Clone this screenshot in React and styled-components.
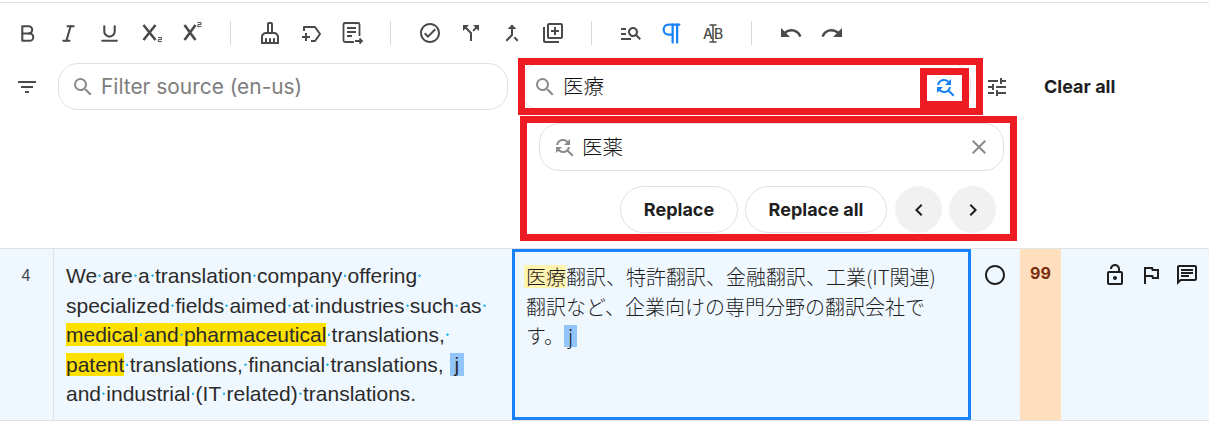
import styled, { createGlobalStyle } from 'styled-components';
import {
  MdCallMerge,
  MdCallSplit,
  MdChevronLeft,
  MdChevronRight,
  MdClose,
  MdFilterList,
  MdFindReplace,
  MdOutlineAssistantPhoto,
  MdOutlineChat,
  MdOutlineCheckCircle,
  MdOutlineCircle,
  MdOutlineCleaningServices,
  MdOutlineLibraryAdd,
  MdOutlineLockOpen,
  MdOutlineManageSearch,
  MdOutlineTune,
  MdRedo,
  MdSearch,
  MdUndo,
} from 'react-icons/md';
import { TbBold, TbItalic, TbPilcrow, TbUnderline } from 'react-icons/tb';

const GlobalStyle = createGlobalStyle`
  body {
    margin: 0;
    background: #ffffff;
    font-family: 'Inter', 'Noto Sans CJK JP', sans-serif;
  }
`;

const Page = styled.div`
  position: relative;
  width: 1209px;
  height: 421px;
  overflow: hidden;
`;

const TopRule = styled.div`
  height: 1px;
  margin-top: 2px;
  background: #e2e2e2;
`;

const Toolbar = styled.div`
  display: flex;
  align-items: center;
  height: 60px;
  padding-left: 7px;
  box-sizing: border-box;
`;

const ToolButton = styled.div`
  width: 41px;
  display: flex;
  justify-content: center;
  align-items: center;
  color: ${(p) => (p.$active ? '#1a82f7' : '#4a4a4a')};
`;

const Divider = styled.div`
  width: 1px;
  height: 24px;
  margin: 0 18px;
  background: #d8d8d8;
`;

const FilterRow = styled.div`
  display: flex;
  align-items: center;
  height: 47px;
`;

const FilterIcon = styled.div`
  width: 54px;
  display: flex;
  justify-content: center;
  color: #4a4a4a;
`;

const Field = styled.div`
  display: flex;
  align-items: center;
  width: ${(p) => p.$width}px;
  height: ${(p) => p.$height}px;
  margin-left: ${(p) => p.$left}px;
  padding: 0 12px;
  gap: 6px;
  box-sizing: border-box;
  border: 1px solid #e0e0e0;
  border-radius: 20px;
  background: #ffffff;
  color: #8a8a8a;
  flex-shrink: 0;
`;

const Placeholder = styled.span`
  font-size: 20.9px;
  color: #7d7d7d;
`;

const FieldValue = styled.span`
  flex: 1;
  margin-bottom: 3px;
  font-family: 'Noto Sans CJK JP', sans-serif;
  font-size: 20.5px;
  font-weight: 300;
  color: #111111;
`;

const FindAction = styled.div`
  display: flex;
  color: #1a82f7;
  margin-right: 1px;
`;

const Tune = styled.div`
  display: flex;
  width: 26px;
  margin-left: 14px;
  color: #4a4a4a;
`;

const ClearAll = styled.div`
  margin-left: 33px;
  font-size: 18px;
  font-weight: 700;
  color: #1f1f1f;
`;

const ReplacePanel = styled.div`
  display: flex;
  flex-direction: column;
  width: 465px;
  height: 125px;
  margin: 13px 0 0 539px;
`;

const ButtonRow = styled.div`
  display: flex;
  justify-content: flex-end;
  gap: 7px;
  margin: 15px 8px 0 0;
`;

const PillButton = styled.div`
  display: flex;
  align-items: center;
  justify-content: center;
  width: ${(p) => p.$width}px;
  height: 47px;
  box-sizing: border-box;
  border: 1px solid #e0e0e0;
  border-radius: 24px;
  font-size: 18px;
  font-weight: 700;
  color: #1f1f1f;
`;

const RoundButton = styled.div`
  display: flex;
  align-items: center;
  justify-content: center;
  width: 47px;
  height: 47px;
  border-radius: 50%;
  background: #f1f1f1;
  color: #1f1f1f;

  ${PillButton} + & {
    margin-left: 1px;
  }
`;

const Row = styled.div`
  display: flex;
  height: 173px;
  box-sizing: border-box;
  border-top: 1px solid #e2e2e2;
  border-bottom: 1px solid #e2e2e2;
  background: #f0f8ff;
`;

const NumberCell = styled.div`
  width: 54px;
  box-sizing: border-box;
  padding-top: 18px;
  padding-right: 1px;
  border-right: 1px solid #dde3e8;
  text-align: center;
  font-family: 'Liberation Sans', sans-serif;
  font-size: 16px;
  color: #3f4650;
`;

const SourceCell = styled.div`
  width: 458px;
  box-sizing: border-box;
  padding: 12px 0 0 12px;
  font-family: 'Liberation Sans', sans-serif;
  font-size: 21px;
  line-height: 29.5px;
  color: #2b2b2b;
`;

const Line = styled.div`
  white-space: pre;
`;

const Dot = styled.span`
  display: inline-block;
  width: 5.25px;
  height: 1em;
  vertical-align: baseline;
  background: radial-gradient(circle at 50% 65%, #29b6e8 1px, transparent 1.4px);
`;

const Mark = styled.span`
  background: #ffe100;
`;

const Picked = styled.span`
  background: #93c5fd;
  padding: 0 5px;
`;

const TargetCell = styled.div`
  width: 459px;
  box-sizing: border-box;
  padding: 10px 0 0 9px;
  border: 3px solid #1a82f7;
  font-family: 'Noto Sans CJK JP', sans-serif;
  font-size: 20px;
  font-weight: 300;
  line-height: 29.5px;
  color: #1f1f1f;
`;

const TargetLine = styled(Line)`
  padding-left: ${(p) => p.$inset}px;
`;

const TargetMark = styled.span`
  display: inline-block;
  padding-left: 2px;
  line-height: 23px;
  background: #fff3b0;
`;

const TargetPicked = styled(Picked)`
  display: inline-block;
  padding: 0 4px;
  line-height: 22px;
`;

const StatusCell = styled.div`
  display: flex;
  justify-content: center;
  width: 49px;
  padding: 14px 2px 0 0;
  box-sizing: border-box;
  color: #1f1f1f;
`;

const ScoreCell = styled.div`
  width: 41px;
  padding-top: 14px;
  box-sizing: border-box;
  background: #ffdfbd;
  text-align: center;
  font-family: 'Inter', sans-serif;
  font-size: 16px;
  font-weight: 700;
  color: #7a2e0e;
`;

const ActionCell = styled.div`
  display: flex;
  justify-content: flex-end;
  flex: 1;
  gap: 12px;
  padding: 14px 10px 0 0;
  box-sizing: border-box;
  color: #1f1f1f;
`;

const Callout = styled.div`
  position: absolute;
  left: ${(p) => p.$x}px;
  top: ${(p) => p.$y}px;
  width: ${(p) => p.$w}px;
  height: ${(p) => p.$h}px;
  box-sizing: border-box;
  border: 7px solid #ed1c24;
`;

const GlyphText = styled.text`
  font-family: 'Inter', sans-serif;
  font-size: 14px;
  font-weight: 500;
  fill: currentColor;
`;

function SubscriptIcon() {
  return (
    <svg width="24" height="24" viewBox="0 0 24 24" fill="none" stroke="currentColor">
      <path d="M4.5 4l12 15M16.5 4l-12 15" strokeWidth="2.6" />
      <path d="M19 16.6h3.5v2h-3.2v2h3.5" strokeWidth="1" />
    </svg>
  );
}

function SuperscriptIcon() {
  return (
    <svg width="24" height="24" viewBox="0 0 24 24" fill="none" stroke="currentColor">
      <path d="M4.5 4l11 15M15.5 4l-11 15" strokeWidth="2.6" />
      <path d="M17.5 1.6h3.5v2h-3.2v2h3.5" strokeWidth="1" />
    </svg>
  );
}

function AddTagIcon() {
  return (
    <svg width="24" height="24" viewBox="0 0 24 24" fill="none" stroke="currentColor" strokeWidth="2">
      <path d="M5 10V6h11l5 7-5 7h-4" strokeLinejoin="round" />
      <path d="M7 12v8M3 16h8" />
    </svg>
  );
}

function DocExportIcon() {
  return (
    <svg width="24" height="24" viewBox="0 0 24 24" fill="none" stroke="currentColor" strokeWidth="1.8">
      <path d="M14 21H5a1.5 1.5 0 0 1-1.5-1.5v-16A1.5 1.5 0 0 1 5 2h13a1.5 1.5 0 0 1 1.5 1.5V15" />
      <path d="M7 7h9M7 11h9M7 15h5M15 20h7M19.5 17.5l2.5 2.5-2.5 2.5" />
    </svg>
  );
}

function CaseIcon() {
  return (
    <svg width="24" height="24" viewBox="0 0 24 24" fill="none" stroke="currentColor" strokeWidth="1.5">
      <GlyphText x="2" y="18" stroke="none">A</GlyphText>
      <GlyphText x="13" y="18" stroke="none">B</GlyphText>
      <path d="M12 4v17M8.5 4h7M8.5 21h7" />
    </svg>
  );
}

function SourceLine({ text }) {
  return text.split('·').map((word, i) => (
    <span key={i}>
      {i > 0 && <Dot />}
      {word}
    </span>
  ));
}

export default function App() {
  return (
    <Page>
      <GlobalStyle />
      <TopRule />
      <Toolbar>
        <ToolButton><TbBold size={25} /></ToolButton>
        <ToolButton><TbItalic size={25} /></ToolButton>
        <ToolButton><TbUnderline size={25} /></ToolButton>
        <ToolButton><SubscriptIcon /></ToolButton>
        <ToolButton><SuperscriptIcon /></ToolButton>
        <Divider />
        <ToolButton><MdOutlineCleaningServices size={24} /></ToolButton>
        <ToolButton><AddTagIcon /></ToolButton>
        <ToolButton><DocExportIcon /></ToolButton>
        <Divider />
        <ToolButton><MdOutlineCheckCircle size={24} /></ToolButton>
        <ToolButton><MdCallSplit size={24} /></ToolButton>
        <ToolButton><MdCallMerge size={24} /></ToolButton>
        <ToolButton><MdOutlineLibraryAdd size={24} /></ToolButton>
        <Divider />
        <ToolButton><MdOutlineManageSearch size={24} /></ToolButton>
        <ToolButton $active><TbPilcrow size={27} /></ToolButton>
        <ToolButton><CaseIcon /></ToolButton>
        <Divider />
        <ToolButton><MdUndo size={24} /></ToolButton>
        <ToolButton><MdRedo size={24} /></ToolButton>
      </Toolbar>

      <FilterRow>
        <FilterIcon><MdFilterList size={24} /></FilterIcon>
        <Field $width={450} $height={47} $left={4}>
          <MdSearch size={24} />
          <Placeholder>Filter source (en-us)</Placeholder>
        </Field>
        <Field $width={451} $height={47} $left={12}>
          <MdSearch size={24} />
          <FieldValue>医療</FieldValue>
          <FindAction><MdFindReplace size={24} /></FindAction>
        </Field>
        <Tune><MdOutlineTune size={24} /></Tune>
        <ClearAll>Clear all</ClearAll>
      </FilterRow>

      <ReplacePanel>
        <Field $width={465} $height={48} $left={0}>
          <MdFindReplace size={24} />
          <FieldValue>医薬</FieldValue>
          <MdClose size={24} />
        </Field>
        <ButtonRow>
          <PillButton $width={118}>Replace</PillButton>
          <PillButton $width={142}>Replace all</PillButton>
          <RoundButton><MdChevronLeft size={24} /></RoundButton>
          <RoundButton><MdChevronRight size={24} /></RoundButton>
        </ButtonRow>
      </ReplacePanel>

      <Row>
        <NumberCell>4</NumberCell>
        <SourceCell>
          <Line><SourceLine text="We·are·a·translation·company·offering·" /></Line>
          <Line><SourceLine text="specialized·fields·aimed·at·industries·such·as·" /></Line>
          <Line><Mark><SourceLine text="medical·and·pharmaceutical" /></Mark><SourceLine text="·translations,·" /></Line>
          <Line><Mark>patent</Mark><SourceLine text="·translations,·financial·translations, " /><Picked>j</Picked></Line>
          <Line><SourceLine text="and·industrial·(IT·related)·translations." /></Line>
        </SourceCell>
        <TargetCell>
          <TargetLine $inset={0}><TargetMark>医療</TargetMark>翻訳、特許翻訳、金融翻訳、工業(IT関連)</TargetLine>
          <TargetLine $inset={2}>翻訳など、企業向けの専門分野の翻訳会社で</TargetLine>
          <TargetLine $inset={2}>す。<TargetPicked>j</TargetPicked></TargetLine>
        </TargetCell>
        <StatusCell><MdOutlineCircle size={24} /></StatusCell>
        <ScoreCell>99</ScoreCell>
        <ActionCell>
          <MdOutlineLockOpen size={24} />
          <MdOutlineAssistantPhoto size={24} />
          <MdOutlineChat size={24} />
        </ActionCell>
      </Row>

      <Callout $x={518} $y={58} $w={465} $h={57} />
      <Callout $x={920} $y={68} $w={49} $h={40} />
      <Callout $x={520} $y={116} $w={497} $h={125} />
    </Page>
  );
}
